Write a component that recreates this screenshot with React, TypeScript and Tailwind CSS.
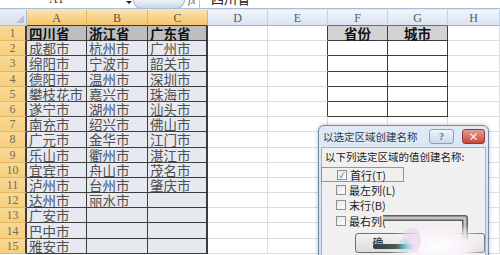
import React from "react";

const COLS = ["A", "B", "C", "D", "E", "F", "G", "H"];

const DATA: string[][] = [
  ["四川省", "浙江省", "广东省"],
  ["成都市", "杭州市", "广州市"],
  ["绵阳市", "宁波市", "韶关市"],
  ["德阳市", "温州市", "深圳市"],
  ["攀枝花市", "嘉兴市", "珠海市"],
  ["遂宁市", "湖州市", "汕头市"],
  ["南充市", "绍兴市", "佛山市"],
  ["广元市", "金华市", "江门市"],
  ["乐山市", "衢州市", "湛江市"],
  ["宜宾市", "舟山市", "茂名市"],
  ["泸州市", "台州市", "肇庆市"],
  ["达州市", "丽水市", ""],
  ["广安市", "", ""],
  ["巴中市", "", ""],
  ["雅安市", "", ""],
];

const CJK = { fontFamily: '"Noto Sans CJK SC", "Liberation Sans", sans-serif' };
const SERIF = { fontFamily: '"Liberation Serif", "DejaVu Serif", serif' };

function FormulaBar() {
  return (
    <div className="flex h-[9px] overflow-hidden border-b border-[#a9bcd4] bg-white" style={CJK}>
      <div className="w-[126px] pl-[49px] -mt-[8px] text-[12px] leading-[14px] text-[#333]" style={SERIF}>
        A1
      </div>
      <div className="w-[6px] pt-[1px]">
        <div className="w-0 h-0 border-l-[3px] border-r-[3px] border-t-[3px] border-l-transparent border-r-transparent border-t-[#222]" />
      </div>
      <div className="ml-[1px] w-[52px] h-[9px] rounded-b-[10px] border border-t-0 border-[#9fb2c9] bg-linear-to-b from-[#eef3f9] to-[#c8d6e7]" />
      <div className="w-[14px] pl-[3px] -mt-[7px] text-[11px] italic leading-[14px] text-[#666]" style={SERIF}>
        fx
      </div>
      <div className="flex-1 border-l border-[#b7c6d8] pl-[11px] -mt-[8px] text-[13px] leading-[14px] text-[#222]">
        四川省
      </div>
    </div>
  );
}

function HeaderRow() {
  return (
    <div className="grid grid-cols-[27px_60px_61px_60px_60px_60px_60px_60px_52px] grid-rows-[16px] h-[16px]">
      <div className="relative border-r border-b border-[#aebfd3] bg-linear-to-b from-[#e9eff7] to-[#d6e0ec]">
        <div
          className="absolute right-[2px] bottom-[2px] w-0 h-0"
          style={{ borderLeft: "8px solid transparent", borderBottom: "8px solid #b4c2d4" }}
        />
      </div>
      {COLS.map((c, i) => {
        const sel = i <= 2;
        const tbl = i === 5 || i === 6;
        return (
          <div
            key={c}
            className={
              sel
                ? "flex items-center justify-center border-r border-b border-r-[#e3b460] border-b-[#3c3c3c] bg-linear-to-b from-[#fbe3ae] to-[#f3c46a] text-[12px] leading-none text-[#5a5248]"
                : tbl
                ? "flex items-center justify-center border-r border-b border-r-[#c5d2e3] border-b-[#6d6d6d] bg-linear-to-b from-[#f1f5fb] to-[#dae3ef] text-[12px] leading-none text-[#4f5d72]"
                : "flex items-center justify-center border-r border-b border-r-[#c5d2e3] border-b-[#9fb4cb] bg-linear-to-b from-[#f1f5fb] to-[#dae3ef] text-[12px] leading-none text-[#4f5d72]"
            }
            style={SERIF}
          >
            {c}
          </div>
        );
      })}
    </div>
  );
}

function Cell({ r, c }: { r: number; c: number }) {
  const inAC = c <= 2;
  const inFG = (c === 5 || c === 6) && r <= 6;
  let cls = "whitespace-nowrap text-[13.5px] leading-[14px] flex items-center ";
  let text = "";
  if (inAC) {
    text = DATA[r - 1][c];
    cls += c === 2 ? "border-r-2 border-b border-[#3c3c3c] " : "border-r border-b border-[#3c3c3c] ";
    cls += r === 1 ? "bg-[#bebebe] font-bold text-[#111] pl-[2px] " : "bg-[#e7e9f1] text-[#505050] pl-[2px] ";
  } else if (inFG) {
    cls += "border-r border-b border-[#3c3c3c] justify-center ";
    if (r === 1) {
      cls += "bg-[#d3d3d3] font-bold text-[#111] ";
      text = c === 5 ? "省份" : "城市";
    } else {
      cls += "bg-white ";
    }
  } else if (c === 4 && r <= 6) {
    cls += "border-r border-b border-r-[#3c3c3c] border-b-[#dadcdd] bg-white ";
  } else {
    cls += "border-r border-b border-[#dadcdd] bg-white ";
  }
  return <div className={cls}>{text}</div>;
}

function Sheet() {
  return (
    <div style={CJK}>
      {Array.from({ length: 15 }, (_, i) => i + 1).map((r) => (
        <div
          key={r}
          className="grid grid-cols-[27px_60px_61px_60px_60px_60px_60px_60px_52px] grid-rows-[15.2px] h-[15.2px]"
        >
          <div
            className="flex items-center justify-center border-r-2 border-b border-r-[#3c3c3c] border-b-[#e2b664] bg-linear-to-b from-[#f9d994] to-[#f6cf80] text-[12px] leading-none text-[#7d6b4e]"
            style={SERIF}
          >
            {r}
          </div>
          {COLS.map((_, c) => (
            <Cell key={c} r={r} c={c} />
          ))}
        </div>
      ))}
    </div>
  );
}

function Dialog() {
  return (
    <div
      className="absolute left-[318px] top-[125px] w-[171px] h-[140px] flex flex-col rounded-t-[6px] border border-[#6f89aa] bg-linear-to-b from-[#dfeaf6] to-[#cddcee] shadow-[0_0_4px_rgba(0,0,0,0.25)]"
      style={CJK}
    >
      <div className="h-[21px] flex items-center justify-between pl-[4px] pr-[3px]">
        <span className="text-[10.5px] leading-[12px] text-[#2b3a52]">以选定区域创建名称</span>
        <div className="flex gap-[8px]">
          <div
            className="w-[25px] h-[15px] rounded-[3px] border border-[#8aa1be] bg-linear-to-b from-[#eef4fb] to-[#c9d8ea] flex items-center justify-center text-[10px] font-bold leading-none text-[#5d6f88]"
            style={SERIF}
          >
            ?
          </div>
          <div className="w-[23px] h-[15px] rounded-[3px] border border-[#8e3a3a] bg-linear-to-b from-[#e69b8f] to-[#c6473a] flex items-center justify-center text-[10px] font-bold leading-none text-white">
            ×
          </div>
        </div>
      </div>
      <div className="flex-1 mx-[2px] border border-[#a3b4c8] bg-[#f0f0f0] pl-[3px] pt-[2px]">
        <div className="text-[10.5px] leading-[14px] text-[#222]">以下列选定区域的值创建名称:</div>
        <div className="mt-[3px] -ml-[4px] w-[83px] h-[15px] border border-[#d9777a] flex items-center pl-[15px] gap-[3px]">
          <div className="w-[10px] h-[10px] border border-[#8f8f8f] bg-linear-to-br from-[#e9e9e9] to-white flex items-center justify-center text-[8px] leading-none text-[#4a5e7c]">
            ✓
          </div>
          <span className="text-[11px] leading-[12px] text-[#222]">首行(T)</span>
        </div>
        {["最左列(L)", "末行(B)", "最右列("].map((t) => (
          <div key={t} className="h-[15.5px] flex items-center pl-[11px] gap-[3px]">
            <div className="w-[10px] h-[10px] border border-[#8f8f8f] bg-linear-to-br from-[#e4e4e4] to-white" />
            <span className="text-[11px] leading-[12px] text-[#222]">{t}</span>
          </div>
        ))}
        <div className="mt-[4px] flex gap-[6px] pl-[30px]">
          <div className="w-[66px] h-[20px] rounded-[3px] border border-[#707070] bg-linear-to-b from-[#f2f2f2] to-[#dcdcdc] flex justify-center pt-[2px] text-[11px] leading-[12px] text-[#222]">
            <span className="-ml-[18px]">确</span>
          </div>
          <div className="w-[62px] h-[20px] rounded-[3px] border border-[#707070] bg-linear-to-b from-[#f2f2f2] to-[#dcdcdc]" />
        </div>
      </div>
    </div>
  );
}

function Annotation() {
  return (
    <svg className="absolute left-0 top-0 pointer-events-none" width="500" height="255" viewBox="0 0 500 255">
      <defs>
        <radialGradient id="blob" cx="50%" cy="50%" r="50%">
          <stop offset="0%" stopColor="#ffffff" stopOpacity="1" />
          <stop offset="60%" stopColor="#f7f1f7" stopOpacity="0.95" />
          <stop offset="100%" stopColor="#f0f0f0" stopOpacity="0" />
        </radialGradient>
        <linearGradient id="streak" x1="0" y1="0" x2="1" y2="0">
          <stop offset="0%" stopColor="#3a3a3a" />
          <stop offset="55%" stopColor="#4a5a5a" />
          <stop offset="80%" stopColor="#7fd3df" />
          <stop offset="100%" stopColor="#e9c7e6" stopOpacity="0" />
        </linearGradient>
      </defs>
      <polyline points="383,218 465,218 465,240" fill="none" stroke="#5f5f5f" strokeWidth="6" strokeLinejoin="round" />
      <polyline points="383,218 465,218 465,240" fill="none" stroke="#c4c4c4" strokeWidth="3" strokeLinejoin="round" />
      <ellipse cx="438" cy="246" rx="50" ry="26" fill="url(#blob)" />
      <ellipse cx="412" cy="240" rx="9" ry="12" fill="#e3c8e8" opacity="0.45" />
      <ellipse cx="404" cy="246" rx="6" ry="7" fill="#9fdbe5" opacity="0.45" />
      <rect x="373" y="244" width="42" height="5" rx="2" fill="url(#streak)" />
    </svg>
  );
}

export default function App() {
  return (
    <div className="relative w-[500px] h-[255px] overflow-hidden bg-white">
      <FormulaBar />
      <div className="h-[1px] bg-[#dfe8f4]" />
      <HeaderRow />
      <Sheet />
      <Dialog />
      <Annotation />
    </div>
  );
}
